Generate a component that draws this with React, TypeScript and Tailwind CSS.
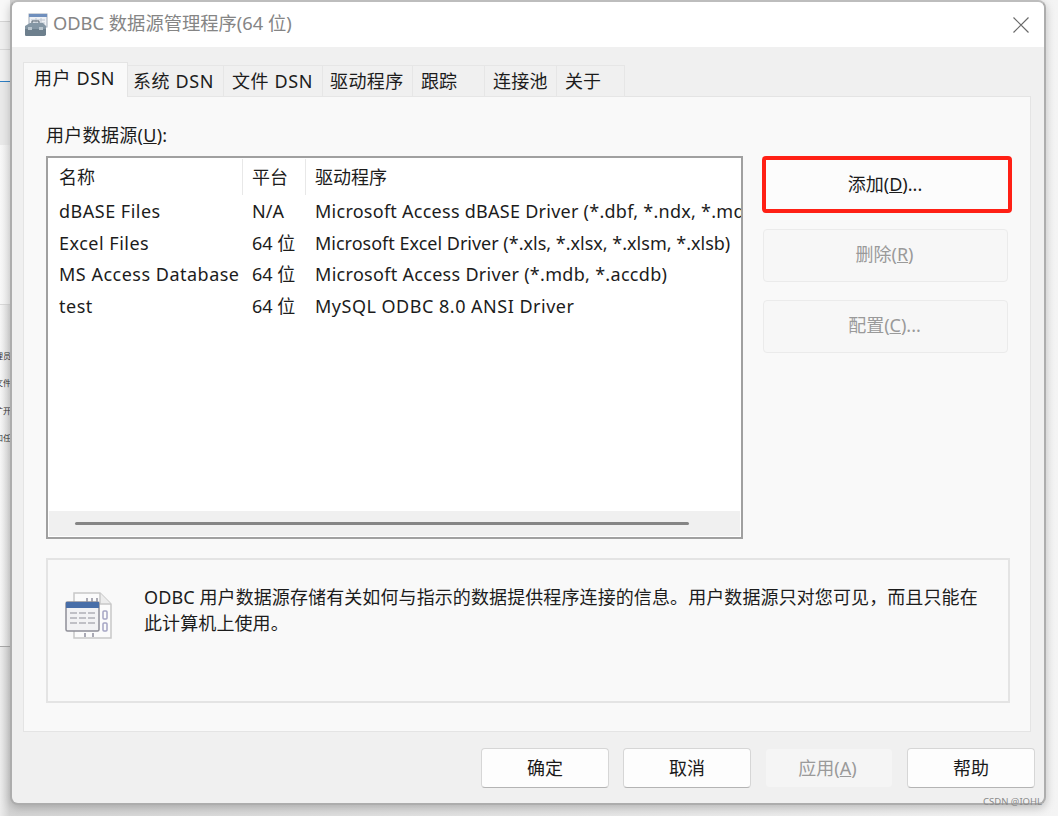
import React from 'react';

const font = "font-['Noto_Sans','Noto_Sans_CJK_SC',sans-serif]";

const tabs = [
  { label: '系统 DSN', box: 'w-[96px] pl-[5px] tracking-[0.6px]' },
  { label: '文件 DSN', box: 'w-[99px] pl-[8px] tracking-[0.6px]' },
  { label: '驱动程序', box: 'w-[90px] pl-[7px] tracking-[0.4px]' },
  { label: '跟踪', box: 'w-[72px] pl-[8px]' },
  { label: '连接池', box: 'w-[72px] pl-[8px] tracking-[0.3px]' },
  { label: '关于', box: 'w-[68px] pl-[8px]' },
];

const rows = [
  { name: 'dBASE Files', platform: 'N/A', driver: 'Microsoft Access dBASE Driver (*.dbf, *.ndx, *.mdx)', fit: 'tracking-[0.26px]' },
  { name: 'Excel Files', platform: '64 位', driver: 'Microsoft Excel Driver (*.xls, *.xlsx, *.xlsm, *.xlsb)', fit: 'tracking-[0px]' },
  { name: 'MS Access Database', platform: '64 位', driver: 'Microsoft Access Driver (*.mdb, *.accdb)', fit: 'tracking-[0.3px]' },
  { name: 'test', platform: '64 位', driver: 'MySQL ODBC 8.0 ANSI Driver', fit: 'tracking-[0.5px]' },
];

function TitleIcon() {
  return (
    <svg width="24" height="24" viewBox="0 0 24 24">
      <rect x="5" y="1" width="18" height="13" fill="#eef1f5" stroke="#a2abb8" />
      <rect x="5" y="1" width="18" height="3" fill="#6f8fbd" />
      <path d="M7 7h14M7 10h14M12 5v8M17 5v8" stroke="#bfc6d0" />
      <path d="M1 13l5-3h13l3 3v9l-2 1H2l-1-1z" fill="#8496a4" />
      <path d="M1 16h21v6l-2 1H2l-1-1z" fill="#6d7f8d" />
      <path d="M8 10V8h7v2" fill="none" stroke="#55636f" />
      <rect x="4" y="14" width="4" height="3" fill="#b8c4cd" />
      <rect x="15" y="14" width="4" height="3" fill="#b8c4cd" />
    </svg>
  );
}

function DataIcon() {
  return (
    <svg width="48" height="50" viewBox="0 0 48 50">
      <path d="M9 1h26l11 11v34H9z" fill="#fbfbfb" stroke="#c8c8c8" strokeWidth="1.5" />
      <path d="M35 1v11h11" fill="#ececec" stroke="#c8c8c8" strokeWidth="1.5" />
      <path d="M22 6v4M27 6v4M32 6v4M20 41v4M28 41v4" stroke="#a9a9b4" strokeWidth="2" />
      <rect x="38" y="19" width="4" height="8" rx="1" fill="none" stroke="#a5a5c4" strokeWidth="1.5" />
      <rect x="38" y="31" width="4" height="8" rx="1" fill="none" stroke="#a5a5c4" strokeWidth="1.5" />
      <rect x="1" y="10" width="33" height="29" rx="1.5" fill="#f2f2f4" stroke="#8f8f98" strokeWidth="1.5" />
      <rect x="1" y="10" width="33" height="6" fill="#486ea8" />
      <path d="M5 21h7M14 21h7M23 21h7M5 26h7M14 26h7M23 26h7M5 31h7M14 31h7M23 31h7" stroke="#b0b0b6" strokeWidth="1.5" />
    </svg>
  );
}

function FooterButton({ children, disabled }: { children: React.ReactNode; disabled?: boolean }) {
  return (
    <button
      className={
        disabled
          ? 'w-[128px] h-[40px] pr-[3px] rounded-[4px] bg-[#f5f5f5] border border-[#f0f0f0] text-[#9a9a9a] text-[18px]'
          : 'w-[128px] h-[40px] rounded-[4px] bg-[#fdfdfd] border border-[#d6d6d6] border-b-[#b4b4b4] text-[#1a1a1a] text-[18px]'
      }
    >
      {children}
    </button>
  );
}

export default function App() {
  return (
    <div className={`${font} relative w-[1058px] h-[816px] overflow-hidden flex bg-gradient-to-r from-[#d4d4d4] to-[#f4f4f4]`}>
      {/* what is left of the window behind the dialog */}
      <div className="w-[10px] shrink-0 h-full flex flex-col overflow-hidden">
        <div className="h-[22px] shrink-0 bg-[#f8f8f8] border-b border-[#d4d4d4]" />
        <div className="h-[28px] shrink-0 bg-[#efefef] border-b border-[#d8d8d8]" />
        <div className="h-[32px] shrink-0 bg-[#f0f0f0] border-b border-[#2f7fc4]" />
        <div className="h-[63px] shrink-0 bg-[#e9e9e9]" />
        <div className="h-[160px] shrink-0 bg-gradient-to-r from-[#f8f8f8] to-[#eeeeee] border-b border-[#d8d8d8]" />
        <div className="h-[342px] shrink-0 bg-gradient-to-r from-[#f6f6f6] to-[#dddddd] border-b border-[#a8a8a8]">
          <div className="flex flex-col items-end pt-[41px] gap-[7.3px] text-[8px] leading-[20px] text-[#333] whitespace-nowrap -mr-[1px]">
            <span>理员</span>
            <span>文件</span>
            <span>扩开</span>
            <span>和任</span>
          </div>
        </div>
        <div className="flex-1 bg-gradient-to-r from-[#ececec] to-[#d2d2d2]" />
      </div>

      <div className="w-[1036px] shrink-0 h-[805px] relative z-10 flex flex-col rounded-[8px] border-2 border-[#adadad] border-t-[#bdbdbd] overflow-hidden bg-[#f0f0f0] shadow-[0_3px_10px_rgba(0,0,0,0.22)]">
        <div className="h-[45px] shrink-0 bg-white flex items-center pl-[12px] pr-[14px]">
          <TitleIcon />
          <span className="ml-[5px] pb-[2px] text-[18.3px] text-[#858585] leading-none">ODBC 数据源管理程序(64 位)</span>
          <svg className="ml-auto" width="18" height="18" viewBox="0 0 18 18">
            <path d="M1.5 1.5l15 15M16.5 1.5l-15 15" stroke="#6a6a6a" strokeWidth="1.2" />
          </svg>
        </div>

        <div className="flex-1 flex flex-col pl-[11px] pr-[13px] pt-[15px] text-[#1c1c1c]">
          {/* tab strip */}
          <div className="h-[35px] flex items-end relative z-10">
            <div className="w-[105px] h-[35px] bg-[#f9f9f9] border border-b-0 border-[#e4e4e4] pl-[10px] text-[18px] leading-[30px] tracking-[0.6px]">
              用户 DSN
            </div>
            {tabs.map((t) => (
              <div
                key={t.label}
                className={`${t.box} h-[32px] bg-[#f0f0f0] border-t border-r border-b border-[#e6e6e6] text-[18px] leading-[30px]`}
              >
                {t.label}
              </div>
            ))}
          </div>

          <div className="w-[1008px] h-[636px] shrink-0 -mt-px bg-[#f9f9f9] border border-[#e4e4e4] pl-[22px] pt-[26px] flex flex-col">
            <div className="text-[18px] leading-[24px] tracking-[0.3px]">
              用户数据源(<span className="underline">U</span>):
            </div>
            <div className="flex mt-[9px]">
              {/* data source list */}
              <div className="w-[697px] h-[383px] shrink-0 bg-white border-2 border-[#a0a0a0] flex flex-col overflow-hidden">
                <div className="flex h-[36px] mt-px text-[18px] leading-[36px] shrink-0">
                  <div className="w-[195px] pl-[11px] border-r border-[#e8e8e8]">名称</div>
                  <div className="w-[63px] pl-[9px] border-r border-[#e8e8e8]">平台</div>
                  <div className="pl-[9px]">驱动程序</div>
                </div>
                <div className="flex-1 text-[18px] leading-[31.7px] pt-[1px]">
                  {rows.map((r) => (
                    <div key={r.name} className="flex whitespace-nowrap">
                      <div className="w-[195px] pl-[11px] tracking-[0.5px]">{r.name}</div>
                      <div className="w-[63px] pl-[9px]">{r.platform}</div>
                      <div className={`${r.fit} flex-1 min-w-0 pl-[9px] overflow-hidden`}>{r.driver}</div>
                    </div>
                  ))}
                </div>
                <div className="h-[25px] ml-px mr-px mb-px bg-[#f0f0f0] flex items-center pl-[26px] shrink-0">
                  <div className="w-[614px] h-[3px] rounded-full bg-[#858585]" />
                </div>
              </div>

              <div className="ml-[19px] flex flex-col shrink-0">
                <button className="w-[250px] h-[57px] pr-[4px] rounded-[4px] border-[4px] border-[#ff2015] bg-[#fcfcfc] text-[18px] text-[#1c1c1c]">
                  添加(<span className="underline">D</span>)...
                </button>
                <button className="mt-[16px] ml-px w-[245px] h-[53px] pr-[2px] pb-[2px] rounded-[4px] border border-[#ebebeb] bg-[#f7f7f7] text-[18px] text-[#9a9a9a]">
                  删除(<span className="underline">R</span>)
                </button>
                <button className="mt-[18px] ml-px w-[245px] h-[53px] pr-[2px] pb-[2px] rounded-[4px] border border-[#ebebeb] bg-[#f7f7f7] text-[18px] text-[#9a9a9a]">
                  配置(<span className="underline">C</span>)...
                </button>
              </div>
            </div>

            {/* description */}
            <div className="mt-[19px] w-[964px] h-[145px] shrink-0 border-2 border-[#e4e4e4] flex">
              <div className="pl-[17px] pt-[32px] shrink-0 w-[96px]">
                <DataIcon />
              </div>
              <p className="pt-[24px] text-[18px] leading-[26px] whitespace-nowrap tracking-[0.1px]">
                ODBC 用户数据源存储有关如何与指示的数据提供程序连接的信息。用户数据源只对您可见，而且只能在
                <br />
                此计算机上使用。
              </p>
            </div>
          </div>

          <div className="flex justify-end gap-[14px] mt-[16px] -mr-[4px]">
            <FooterButton>确定</FooterButton>
            <FooterButton>取消</FooterButton>
            <FooterButton disabled>
              应用(<span className="underline">A</span>)
            </FooterButton>
            <FooterButton>帮助</FooterButton>
          </div>
        </div>
      </div>

      <div className="absolute z-20 left-[983px] top-[796px] text-[9.5px] leading-[12px] text-[#8a8a8a]">CSDN @IOHL</div>
    </div>
  );
}
